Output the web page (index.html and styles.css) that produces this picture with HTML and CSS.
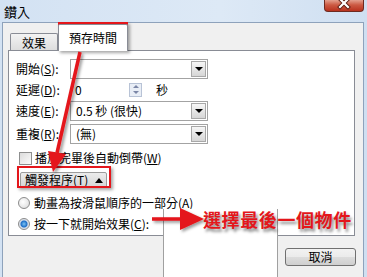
FILE: index.html
```html
<!DOCTYPE html>
<html lang="zh-Hant">
<head>
    <meta charset="UTF-8">
    <title>鑽入</title>
    <link rel="stylesheet" href="styles.css">
</head>
<body>
    <div class="window">
        <!-- Title Bar -->
        <div class="titlebar">
            <span class="title">鑽入</span>
            <div class="close">
                <svg width="16" height="11" viewBox="0 0 16 11">
                    <path d="M4 -1 L12 7 M12 -1 L4 7" stroke="#5a1a10" stroke-width="4" stroke-linecap="square"/>
                    <path d="M4 -1 L12 7 M12 -1 L4 7" stroke="#fff" stroke-width="2.2" stroke-linecap="square"/>
                </svg>
            </div>
        </div>

        <!-- Dialog -->
        <div class="client">
            <div class="tabs">
                <div class="tab">效果</div>
                <div class="tab active">預存時間</div>
            </div>

            <div class="panel">
                <div class="row">
                    <span class="label">開始(<u>S</u>):</span>
                    <div class="combo"><span></span><span class="drop"></span></div>
                </div>
                <div class="row">
                    <span class="label">延遲(<u>D</u>):</span>
                    <div class="spin">
                        <span>0</span>
                        <span class="spin-btns"><i class="up"></i><i class="down"></i></span>
                    </div>
                    <span class="unit">秒</span>
                </div>
                <div class="row">
                    <span class="label">速度(<u>E</u>):</span>
                    <div class="combo"><span>0.5 秒 (很快)</span><span class="drop"></span></div>
                </div>
                <div class="row row-gap">
                    <span class="label">重複(<u>R</u>):</span>
                    <div class="combo"><span>(無)</span><span class="drop"></span></div>
                </div>
                <div class="row check-row">
                    <span class="check"></span>
                    <span>播放完畢後自動倒帶(<u>W</u>)</span>
                </div>
                <div class="trigger-row">
                    <div class="trigger">觸發程序(<u>T</u>) <span class="caret"></span></div>
                </div>
                <div class="row radio-row">
                    <span class="radio"></span>
                    <span>動畫為按滑鼠順序的一部分(<u>A</u>)</span>
                </div>
                <div class="row">
                    <span class="radio on"></span>
                    <span>按一下就開始效果(<u>C</u>):</span>
                </div>
            </div>

            <div class="footer">
                <button class="btn">取消</button>
            </div>
        </div>

        <!-- Open dropdown list -->
        <div class="popup"></div>

        <!-- Annotations -->
        <div class="mark mark-tab"></div>
        <div class="mark mark-trigger"></div>
        <svg class="annot" width="367" height="277" viewBox="0 0 367 277">
            <defs>
                <filter id="shadow" x="-20%" y="-20%" width="140%" height="140%">
                    <feDropShadow dx="2" dy="2" stdDeviation="1.5" flood-color="#000" flood-opacity="0.4"/>
                </filter>
            </defs>
            <g fill="#e4161b" stroke="#e4161b" filter="url(#shadow)">
                <line x1="80" y1="52" x2="57" y2="153" stroke-width="3.5"/>
                <polygon points="66,154 53,172 48,151" stroke="none"/>
                <line x1="152" y1="219" x2="182" y2="219" stroke-width="3.5"/>
                <polygon points="180,208 204,219 180,230" stroke="none"/>
            </g>
        </svg>
        <div class="note">選擇最後一個物件</div>
    </div>
</body>
</html>
```

FILE: styles.css
```css
/* Base */
body {
    margin: 0;
    font-family: "Noto Sans CJK TC", "Noto Sans CJK SC", sans-serif;
    font-size: 12px;
    color: #000;
}

u {
    text-decoration: underline;
}

.window {
    position: relative;
    width: 367px;
    height: 277px;
    overflow: hidden;
    display: flex;
    flex-direction: column;
    background: linear-gradient(90deg, #d3e2f3, #dde9f6 60%, #cfdff1);
}

/* Title Bar */
.titlebar {
    height: 22px;
    display: flex;
    justify-content: space-between;
    align-items: flex-start;
    padding-left: 4px;
}

.title {
    font-size: 13px;
    line-height: 13px;
    margin-top: 5px;
}

.close {
    width: 40px;
    height: 12px;
    margin-right: 3px;
    box-sizing: border-box;
    border: 1px solid #6e2a20;
    border-top: none;
    border-radius: 0 0 4px 4px;
    background: linear-gradient(#e4a08e, #cc5a43 45%, #b8321e);
    display: flex;
    justify-content: center;
    align-items: flex-start;
}

/* Client Area */
.client {
    flex: 1;
    margin: 0 3px 0 2px;
    border: 1px solid #8ea2bb;
    border-bottom: none;
    background: #f0f0f0;
    display: flex;
    flex-direction: column;
}

.tabs {
    display: flex;
    align-items: flex-end;
    height: 27px;
    margin-top: 1px;
    padding-left: 5px;
}

.tab {
    width: 48px;
    height: 18px;
    margin-left: 2px;
    box-sizing: border-box;
    border: 1px solid #898c95;
    border-bottom: none;
    border-radius: 2px 2px 0 0;
    background: linear-gradient(#f3f3f3, #dcdcdc);
    display: flex;
    align-items: center;
    justify-content: center;
    line-height: 1;
}

.tab.active {
    position: relative;
    z-index: 1;
    width: 70px;
    height: 27px;
    margin-left: 0;
    background: #fff;
}

.panel {
    height: 186px;
    margin: -1px 8px 0 5px;
    box-sizing: border-box;
    border: 1px solid #898c95;
    background: #fff;
    padding: 7px 0 0 7px;
}

/* Form Rows */
.row {
    display: flex;
    align-items: center;
    height: 21px;
    line-height: 1;
    white-space: nowrap;
}

.row-gap {
    margin-top: 2px;
}

.label {
    width: 54px;
}

.combo {
    width: 138px;
    height: 20px;
    box-sizing: border-box;
    border: 1px solid #a3a3a3;
    padding-left: 5px;
    display: flex;
    align-items: center;
    justify-content: space-between;
}

.drop {
    width: 15px;
    height: 16px;
    margin-right: 1px;
    box-sizing: border-box;
    border: 1px solid #a8a8a8;
    background: linear-gradient(#f6f6f6, #d6d6d6);
    display: flex;
    align-items: center;
    justify-content: center;
}

.drop::after {
    content: "";
    border-left: 4px solid transparent;
    border-right: 4px solid transparent;
    border-top: 4px solid #000;
}

.spin {
    width: 73px;
    height: 20px;
    box-sizing: border-box;
    padding-left: 5px;
    display: flex;
    align-items: center;
    justify-content: space-between;
}

.spin-btns {
    width: 13px;
    height: 14px;
    margin-right: 1px;
    box-sizing: border-box;
    border: 1px solid #b8c3d6;
    background: #e9eef6;
    display: flex;
    flex-direction: column;
    align-items: center;
    justify-content: space-around;
}

.spin-btns i {
    border-left: 3px solid transparent;
    border-right: 3px solid transparent;
}

.spin-btns .up {
    border-bottom: 3px solid #7b86a6;
}

.spin-btns .down {
    border-top: 3px solid #7b86a6;
}

.unit {
    margin-left: 13px;
}

.check-row {
    height: 20px;
    margin-top: 4px;
}

.check {
    width: 13px;
    height: 13px;
    margin: 0 3px 0 3px;
    box-sizing: border-box;
    border: 1px solid #8e8f8f;
    background: linear-gradient(135deg, #dcdcdc, #fbfbfb);
}

.trigger-row {
    display: flex;
    margin-top: 4px;
}

.trigger {
    width: 87px;
    height: 16px;
    margin-left: 4px;
    box-sizing: border-box;
    border: 1px solid #9c9c9c;
    border-radius: 2px;
    background: linear-gradient(#ececec, #d5d5d5);
    padding-left: 4px;
    display: flex;
    align-items: center;
    line-height: 1;
    white-space: nowrap;
}

.caret {
    margin-left: 7px;
    border-left: 4px solid transparent;
    border-right: 4px solid transparent;
    border-bottom: 5px solid #000;
}

.radio-row {
    height: 20px;
    margin-top: 5px;
}

.radio {
    width: 12px;
    height: 12px;
    margin: 0 4px 0 2px;
    box-sizing: border-box;
    border: 1px solid #8b8b8b;
    border-radius: 50%;
    background: radial-gradient(circle at 40% 40%, #fff, #d8d8d8);
}

.radio.on {
    background: radial-gradient(circle, #7cc4f4 0, #1f6fc8 3px, #cfd8e6 4px, #f4f4f4 6px);
}

/* Footer */
.footer {
    display: flex;
    justify-content: flex-end;
    padding: 12px 7px 0 0;
}

.btn {
    width: 71px;
    height: 18px;
    padding: 0;
    border: 1px solid #707070;
    border-radius: 3px;
    background: linear-gradient(#f2f2f2, #ebebeb 50%, #dddddd 50%, #cfcfcf);
    font-family: inherit;
    font-size: 12px;
    line-height: 1;
}

/* Overlays */
.popup {
    position: absolute;
    left: 163px;
    top: 209px;
    width: 115px;
    height: 68px;
    box-sizing: border-box;
    border-left: 1px solid #a0a0a0;
    border-right: 1px solid #a0a0a0;
    background: #fff;
}

.mark {
    position: absolute;
    box-sizing: border-box;
    border: 2px solid #e4161b;
    box-shadow: 2px 2px 3px rgba(0, 0, 0, 0.35);
}

.mark-tab {
    left: 58px;
    top: 22px;
    width: 70px;
    height: 29px;
}

.mark-trigger {
    left: 17px;
    top: 166px;
    width: 94px;
    height: 22px;
}

.annot {
    position: absolute;
    left: 0;
    top: 0;
    pointer-events: none;
}

.note {
    position: absolute;
    left: 203px;
    top: 207px;
    font-size: 18px;
    font-weight: bold;
    line-height: 24px;
    letter-spacing: 0.6px;
    color: #e4161b;
    text-shadow: 2px 3px 3px rgba(0, 0, 0, 0.45);
    white-space: nowrap;
}
```
